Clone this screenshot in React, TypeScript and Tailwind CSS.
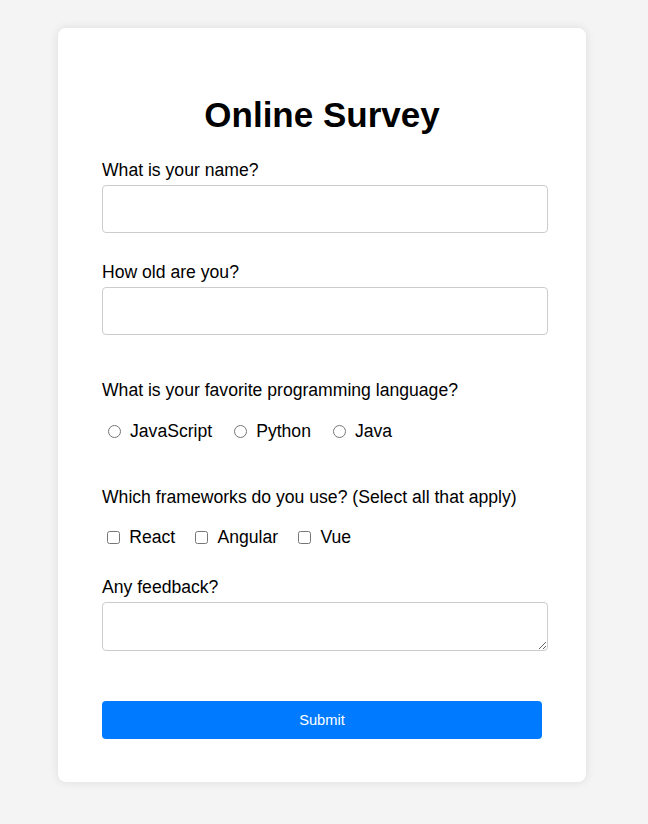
import React from 'react';

const languages = ['JavaScript', 'Python', 'Java'];
const frameworks = ['React', 'Angular', 'Vue'];

export default function App() {
  return (
    <div className="min-h-screen bg-[#f4f4f4] pt-[28px] pb-[42px] font-['Liberation_Sans',Arial,sans-serif] text-black">
      <div className="ml-[58px] w-[528px] bg-white rounded-[8px] shadow-[0_0_10px_rgba(0,0,0,0.1)] px-[44px] pt-[67px] pb-[43px]">
        <h1 className="text-[35px] leading-[40px] font-bold text-center">Online Survey</h1>

        <form className="flex flex-col text-[17.6px] leading-[20px]">
          {/* Name */}
          <label className="block mt-[25px]">What is your name?</label>
          <input type="text" className="block mt-[5px] w-[446px] h-[48px] border border-[#ccc] rounded-[4px] px-[10px] outline-none" />

          {/* Age */}
          <label className="block mt-[29px]">How old are you?</label>
          <input type="number" className="block mt-[5px] w-[446px] h-[48px] border border-[#ccc] rounded-[4px] px-[10px] outline-none" />

          {/* Favorite language */}
          <label className="block mt-[45px]">What is your favorite programming language?</label>
          <div className="flex items-center mt-[21px] h-[20px]">
            {languages.map((lang) => (
              <label key={lang} className="flex items-center mr-[16px]">
                <input type="radio" name="language" className="m-0 ml-[6px] mr-[9px] w-[13px] h-[13px]" />
                {lang}
              </label>
            ))}
          </div>

          {/* Frameworks */}
          <label className="block mt-[46px]">Which frameworks do you use? (Select all that apply)</label>
          <div className="flex items-center mt-[20px] h-[20px]">
            {frameworks.map((fw) => (
              <label key={fw} className="flex items-center mr-[15px]">
                <input type="checkbox" className="m-0 ml-[4.7px] mr-[9.6px] w-[13px] h-[13px]" />
                {fw}
              </label>
            ))}
          </div>

          {/* Feedback */}
          <label className="block mt-[30px]">Any feedback?</label>
          <textarea className="block mt-[5px] w-[446px] h-[49px] border border-[#ccc] rounded-[4px] px-[10px] outline-none" />

          <button type="button" className="mt-[50px] w-[440px] h-[38px] bg-[#007bff] text-white text-[14.67px] rounded-[4px]">
            Submit
          </button>
        </form>
      </div>
    </div>
  );
}
